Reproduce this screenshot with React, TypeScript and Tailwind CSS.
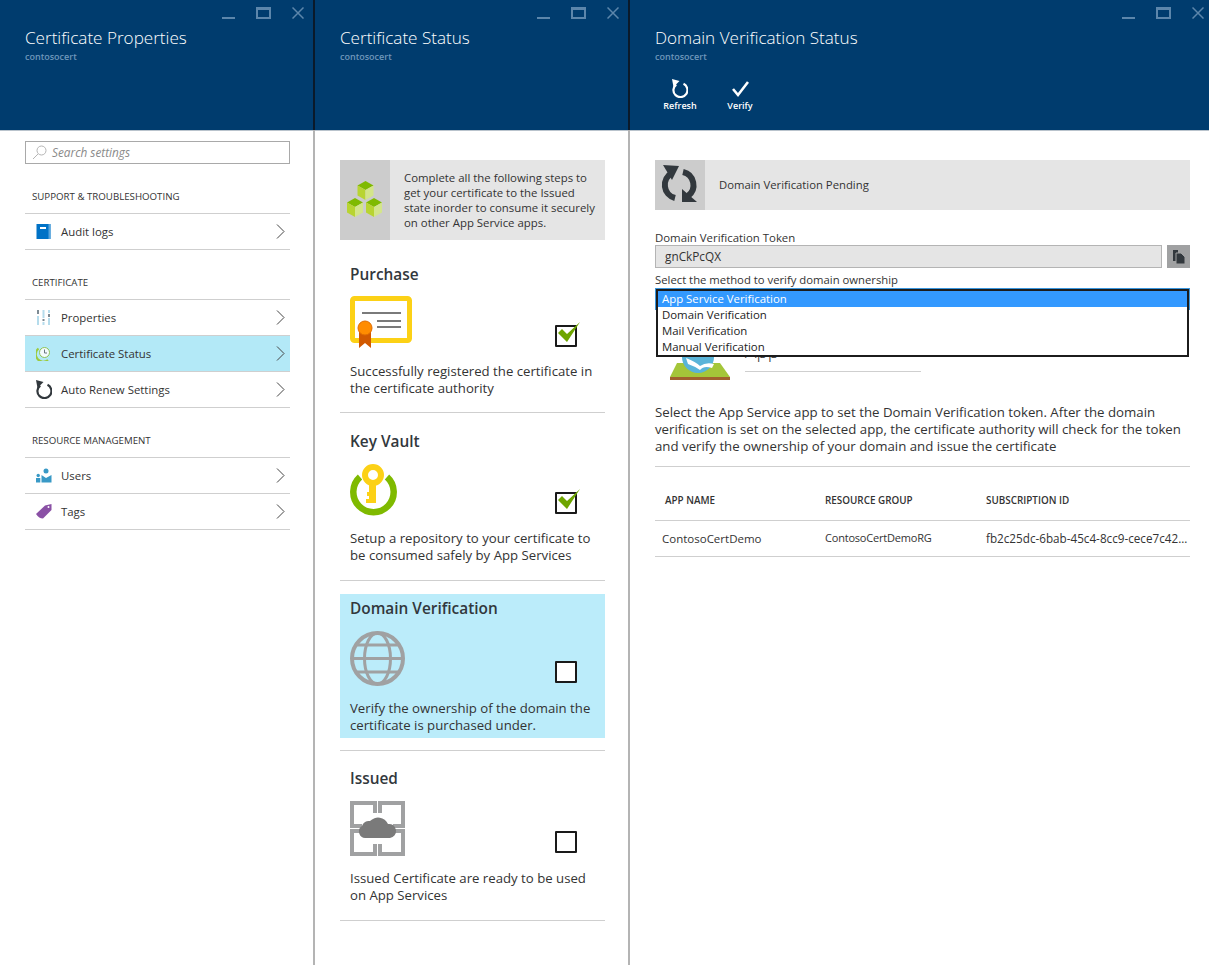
import React from 'react';

const WindowControls = ({ wide }: { wide?: boolean }) => (
  <div className={`flex justify-end pt-[7px] gap-[21px] h-[22px] ${wide ? 'pr-[5px]' : 'pr-[9px]'}`}>
    <svg width="13" height="12" viewBox="0 0 13 12"><rect x="0" y="10" width="13" height="2" fill="#5c86ab" /></svg>
    <svg width="15" height="12" viewBox="0 0 15 12"><rect x="1" y="1" width="13" height="10" fill="none" stroke="#5c86ab" strokeWidth="2" /><rect x="1" y="0" width="13" height="3" fill="#5c86ab" /></svg>
    <svg width="12" height="12" viewBox="0 0 12 12"><path d="M0.5 0.5 L11.5 11.5 M11.5 0.5 L0.5 11.5" stroke="#5c86ab" strokeWidth="1.5" /></svg>
  </div>
);

const BladeHeader = ({ title, wide, children }: { title: string; wide?: boolean; children?: React.ReactNode }) => (
  <div className="h-[131px] bg-[#003c6e] border-b border-[#b9c3cc]">
    <WindowControls wide={wide} />
    <div className="pl-[25px] pt-[3px]">
      <div className="text-[17.1px] leading-[26px] text-white font-light">{title}</div>
      <div className="text-[9px] leading-[12px] font-semibold text-[#6f97bb]">contosocert</div>
      {children}
    </div>
  </div>
);

const Chevron = () => (
  <svg width="9" height="15" viewBox="0 0 9 15" className="ml-auto mr-[5px]">
    <path d="M1 0.5 L8 7.5 L1 14.5" fill="none" stroke="#444" strokeWidth="1" />
  </svg>
);

const BookIcon = () => (
  <svg width="15" height="15" viewBox="0 0 15 15">
    <rect x="0.5" y="0" width="14" height="15" fill="#0072c6" />
    <rect x="12.5" y="0" width="2" height="15" fill="#59a5dd" />
    <rect x="4" y="3" width="6" height="2" fill="#fff" />
  </svg>
);

const SlidersIcon = () => (
  <svg width="15" height="15" viewBox="0 0 15 15">
    <rect x="1" y="0" width="2" height="4" fill="#7d8a93" /><rect x="1" y="6" width="2" height="9" fill="#b5dcec" />
    <rect x="6.5" y="0" width="2" height="8" fill="#b5dcec" /><rect x="6.5" y="9" width="2" height="2" fill="#7d8a93" /><rect x="6.5" y="12" width="2" height="3" fill="#b5dcec" />
    <rect x="12" y="0" width="2" height="3" fill="#b5dcec" /><rect x="12" y="4" width="2" height="3" fill="#7d8a93" /><rect x="12" y="8" width="2" height="7" fill="#b5dcec" />
  </svg>
);

const ClockIcon = () => (
  <svg width="15" height="15" viewBox="0 0 15 15">
    <path d="M2.5 2.5 A7 7 0 0 0 12 14" fill="none" stroke="#9ccb3c" strokeWidth="2" />
    <circle cx="8.5" cy="6.5" r="5" fill="#f4fbfd" stroke="#8fc356" strokeWidth="1" />
    <path d="M8.5 3.5 V7 H11" fill="none" stroke="#6b7780" strokeWidth="1" />
  </svg>
);

const RefreshIcon = ({ color }: { color: string }) => (
  <svg width="16" height="19" viewBox="0 0 16 19">
    <path d="M4.2 5.5 A7 7 0 1 0 11.5 4.8" fill="none" stroke={color} strokeWidth="2.2" />
    <path d="M0 0 L7.5 2 L1.5 8 Z" fill={color} />
  </svg>
);

const UsersIcon = () => (
  <svg width="16" height="15" viewBox="0 0 16 15">
    <circle cx="10" cy="3" r="2.5" fill="#3999c6" />
    <path d="M5.5 7 L10 10 L15.5 7 V14.5 H5.5 Z" fill="#3999c6" />
    <circle cx="2.2" cy="7.5" r="1.7" fill="#3999c6" />
    <path d="M0 10 H4.3 V14.5 H0 Z" fill="#3999c6" />
  </svg>
);

const TagIcon = () => (
  <svg width="16" height="15" viewBox="0 0 16 15">
    <path d="M0 10 L9 1.5 L15.5 0 L15.5 6 L7 14.5 Q3 14.5 0 10 Z" fill="#8a50a5" />
    <circle cx="12.5" cy="3" r="1" fill="#fff" />
  </svg>
);

const NavRow = ({ icon, label, active }: { icon: React.ReactNode; label: string; active?: boolean }) => (
  <div className={`flex items-center h-[36px] border-b border-[#cfcfcf] ${active ? 'bg-[#b3e9f7]' : ''}`}>
    <div className="w-[36px] pl-[11px] flex items-center shrink-0">{icon}</div>
    <span className="text-[11.4px] text-[#333]">{label}</span>
    <Chevron />
  </div>
);

const NavSection = ({ title, children }: { title: string; children: React.ReactNode }) => (
  <div className="mt-[25px]">
    <div className="pl-[7px] pt-[1px] h-[24px] text-[9.7px] leading-[14px] font-medium text-[#333]">{title}</div>
    <div className="border-t border-[#cfcfcf]">{children}</div>
  </div>
);

const CubesIcon = () => {
  const cube = (x: number, y: number) => (
    <g transform={`translate(${x} ${y})`}>
      <path d="M8 0 L16 4.5 L8 9 L0 4.5 Z" fill="#7fba00" />
      <path d="M0 4.5 L8 9 V19 L0 14.5 Z" fill="#b8d432" />
      <path d="M16 4.5 L8 9 V19 L16 14.5 Z" fill="#d3e58a" />
    </g>
  );
  return (
    <svg width="37" height="38" viewBox="0 0 37 38">
      {cube(10.5, 0)}
      {cube(0, 17)}
      {cube(19, 17)}
    </svg>
  );
};

const CertIcon = () => (
  <svg width="62" height="53" viewBox="0 0 62 53">
    <rect x="2.5" y="2.5" width="57" height="42" rx="2" fill="#fff" stroke="#fcd116" strokeWidth="5" />
    <rect x="12" y="16" width="39" height="2" fill="#7a7a7a" />
    <rect x="27" y="24" width="24" height="2" fill="#7a7a7a" />
    <rect x="27" y="30" width="24" height="2" fill="#7a7a7a" />
    <path d="M9 32 H21 V52 L15 47 L9 52 Z" fill="#d15900" />
    <circle cx="15" cy="32" r="7" fill="#ff8c00" stroke="#e06c00" strokeWidth="1" />
  </svg>
);

const KeyVaultIcon = () => (
  <svg width="47" height="53" viewBox="0 0 47 53">
    <path d="M10 14 A20.2 20.2 0 1 0 37 14" fill="none" stroke="#7fba00" strokeWidth="6.5" />
    <circle cx="23" cy="12" r="8" fill="none" stroke="#fcd116" strokeWidth="6" />
    <path d="M19 20 H26 V40 H16 V36 H19 V33 H17 V29 H19 Z" fill="#fcd116" />
  </svg>
);

const GlobeIcon = () => (
  <svg width="55" height="55" viewBox="0 0 55 55" fill="none" stroke="#a0a1a2" strokeWidth="3">
    <circle cx="27.5" cy="27.5" r="25.5" strokeWidth="4" />
    <ellipse cx="27.5" cy="27.5" rx="13" ry="25.5" />
    <path d="M2 27.5 H53 M7 14 H48 M7 41 H48" />
  </svg>
);

const IssuedIcon = () => (
  <svg width="55" height="55" viewBox="0 0 55 55">
    <g fill="none" stroke="#a0a1a2" strokeWidth="4">
      <path d="M25 12 V2 H2 V25 H12" /><path d="M30 12 V2 H53 V25 H43" /><path d="M25 43 V53 H2 V30 H12" /><path d="M30 43 V53 H53 V30 H43" />
    </g>
    <path d="M16 37 A6.5 6.5 0 0 1 12 25 A7 7 0 0 1 20 20 A11 11 0 0 1 38 23 A7 7 0 0 1 40 37 Z" fill="#7a7a7a" />
  </svg>
);

const Checkbox = ({ checked }: { checked?: boolean }) => (
  <div className={`relative w-[22px] h-[22px] border-2 border-[#1a1a1a] rounded-[1px] bg-white ml-auto mr-[28px] self-end shrink-0 ${checked ? 'mb-[2px]' : 'mb-[3px]'}`}>
    {checked && (
      <svg width="26" height="26" viewBox="0 0 26 26" className="absolute left-[-1px] top-[-9px]">
        <path d="M2 15 L6 11 L11 16 L24 4 L11 24 Z" fill="#6ea500" />
      </svg>
    )}
  </div>
);

const Step = ({ title, icon, text, checked, active, iconH }: { title: string; icon: React.ReactNode; text: string[]; checked?: boolean; active?: boolean; iconH: string }) => (
  <div className={`pl-[10px] ${active ? 'bg-[#bbecfa] pt-[1px] pb-[4px]' : ''}`}>
    <div className="h-[26px] pt-[1px] text-[15.4px] leading-[26px] font-semibold text-[#32383d]">{title}</div>
    <div className={`flex ${iconH}`}>
      {icon}
      <Checkbox checked={checked} />
    </div>
    <div className="text-[13.2px] leading-[17px] text-[#333] mt-[14px]">
      {text.map((t) => <div key={t}>{t}</div>)}
    </div>
  </div>
);

const SyncIcon = () => (
  <svg width="50" height="50" viewBox="0 0 50 50" fill="none">
    <path d="M17 13 A13.5 13.5 0 0 0 20 38" stroke="#32383d" strokeWidth="6" />
    <path d="M28 12 A13.5 13.5 0 0 1 33 36" stroke="#32383d" strokeWidth="6" />
    <path d="M8 5 L24 6 L17 20 Z" fill="#32383d" />
    <path d="M27 29 L42 42 L27 42 Z" fill="#32383d" />
  </svg>
);

const AppServiceIcon = () => (
  <svg width="60" height="40" viewBox="0 0 60 40">
    <path d="M7 23 H50 L60 37 H0 Z" fill="#a4c639" />
    <circle cx="28" cy="17" r="16" fill="#59b4d9" />
    <path d="M16 18 Q26 22 30 26 Q36 22 44 24 L42 28 Q34 25 30 30 Q24 26 18 24 Z" fill="#fff" />
    <rect x="0" y="37" width="60" height="3" fill="#a0622d" />
  </svg>
);

const DROPDOWN_OPTIONS = ['Domain Verification', 'Mail Verification', 'Manual Verification'];

export default function App() {
  return (
    <div className="flex w-[1209px] h-[965px] overflow-hidden bg-white font-['Open_Sans',sans-serif]">
      {/* blade 1 */}
      <div className="w-[313px] shrink-0">
        <BladeHeader title="Certificate Properties" />
        <div className="pl-[25px] pr-[23px] pt-[10px]">
          <div className="flex items-center h-[23px] border border-[#a9a9a9] pl-[6px] gap-[5px]">
            <svg width="15" height="15" viewBox="0 0 15 15" fill="none" stroke="#b5b5b5"><circle cx="9.5" cy="5.5" r="4.5" /><path d="M6 9 L1 14" /></svg>
            <span className="text-[11.8px] italic text-[#8a8a8a]">Search settings</span>
          </div>
          <NavSection title="SUPPORT & TROUBLESHOOTING">
            <NavRow icon={<BookIcon />} label="Audit logs" />
          </NavSection>
          <NavSection title="CERTIFICATE">
            <NavRow icon={<SlidersIcon />} label="Properties" />
            <NavRow icon={<ClockIcon />} label="Certificate Status" active />
            <NavRow icon={<RefreshIcon color="#32383d" />} label="Auto Renew Settings" />
          </NavSection>
          <NavSection title="RESOURCE MANAGEMENT">
            <NavRow icon={<UsersIcon />} label="Users" />
            <NavRow icon={<TagIcon />} label="Tags" />
          </NavSection>
        </div>
      </div>
      <div className="w-[2px] shrink-0 bg-[#b4b4b4] flex flex-col"><div className="h-[130px] bg-[#0a1a2a]" /></div>

      {/* blade 2 */}
      <div className="w-[313px] shrink-0">
        <BladeHeader title="Certificate Status" />
        <div className="pl-[25px] pr-[23px] pt-[29px]">
          <div className="flex h-[80px] bg-[#e5e5e5]">
            <div className="w-[50px] bg-[#cccccc] flex items-center justify-center"><CubesIcon /></div>
            <div className="pl-[14px] pt-[10px] text-[11.4px] leading-[15px] text-[#333]">
              <div>Complete all the following steps to</div>
              <div>get your certificate to the Issued</div>
              <div>state inorder to consume it securely</div>
              <div>on other App Service apps.</div>
            </div>
          </div>
          <div className="mt-[21px] pb-[15px] border-b border-[#cfcfcf]">
            <Step title="Purchase" icon={<CertIcon />} iconH="h-[53px] mt-[9px]" checked text={['Successfully registered the certificate in', 'the certificate authority']} />
          </div>
          <div className="mt-[15px] pb-[16px] border-b border-[#cfcfcf]">
            <Step title="Key Vault" icon={<KeyVaultIcon />} iconH="h-[53px] mt-[9px]" checked text={['Setup a repository to your certificate to', 'be consumed safely by App Services']} />
          </div>
          <div className="mt-[13px] pb-[12px] border-b border-[#cfcfcf]">
            <Step title="Domain Verification" icon={<GlobeIcon />} iconH="h-[55px] mt-[10px]" active text={['Verify the ownership of the domain the', 'certificate is purchased under.']} />
          </div>
          <div className="mt-[14px] pb-[16px] border-b border-[#cfcfcf]">
            <Step title="Issued" icon={<IssuedIcon />} iconH="h-[55px] mt-[10px]" text={['Issued Certificate are ready to be used', 'on App Services']} />
          </div>
        </div>
      </div>
      <div className="w-[2px] shrink-0 bg-[#b4b4b4] flex flex-col"><div className="h-[130px] bg-[#0a1a2a]" /></div>

      {/* blade 3 */}
      <div className="flex-1 min-w-0">
        <BladeHeader title="Domain Verification Status" wide>
          <div className="flex mt-[16px] text-white text-[9px] font-semibold">
            <div className="w-[50px] flex flex-col items-center gap-[2px]">
              <RefreshIcon color="#fff" />
              <span className="leading-[12px]">Refresh</span>
            </div>
            <div className="w-[50px] ml-[10px] flex flex-col items-center gap-[2px]">
              <svg width="17" height="19" viewBox="0 0 17 19"><path d="M1 10 L6 16 L16 3" fill="none" stroke="#fff" strokeWidth="2.6" /></svg>
              <span className="leading-[12px]">Verify</span>
            </div>
          </div>
        </BladeHeader>
        <div className="pl-[25px] pr-[19px] pt-[29px]">
          <div className="flex h-[50px] items-center bg-[#e5e5e5]">
            <div className="w-[50px] h-[50px] bg-[#cccccc]"><SyncIcon /></div>
            <span className="pl-[14px] pt-[1px] text-[11.3px] text-[#333]">Domain Verification Pending</span>
          </div>
          <div className="mt-[20px] text-[11.4px] leading-[15px] text-[#333]">Domain Verification Token</div>
          <div className="flex gap-[5px]">
            <div className="flex-1 h-[23px] border border-[#b4b4b4] bg-[#e5e5e5] pl-[9px] text-[11.8px] leading-[20px] text-[#333]">gnCkPcQX</div>
            <div className="w-[23px] h-[23px] bg-[#a0a1a2] flex items-center justify-center">
              <svg width="12" height="14" viewBox="0 0 12 14"><path d="M0 0 H5 V11 H0 Z" fill="#32383d" /><path d="M3 3 H8 L12 7 V14 H3 Z" fill="#32383d" stroke="#a0a1a2" strokeWidth="1" /></svg>
            </div>
          </div>
          <div className="mt-[4px] text-[11.3px] leading-[15px] text-[#333]">Select the method to verify domain ownership</div>
          <div className="relative h-[22px] mt-[1px] border border-[#3a96dd]">
            <div className="absolute left-0 right-0 top-0 border-2 border-[#1c1c1c] bg-white text-[11.4px] leading-[16px] text-[#222] z-10">
              <div className="bg-[#3399ff] text-white pl-[4px]">App Service Verification</div>
              {DROPDOWN_OPTIONS.map((o) => <div key={o} className="pl-[4px]">{o}</div>)}
            </div>
          </div>
          <div className="flex mt-[18px] h-[52px]">
            <div className="ml-[15px] self-end h-[40px]"><AppServiceIcon /></div>
            <div className="ml-[15px] w-[176px] h-[44px] border-b border-[#cfcfcf] pt-[10px] text-[19px] leading-[26px] font-light text-[#333]">App</div>
          </div>
          <div className="mt-[24px] text-[13.25px] leading-[17px] text-[#333] pb-[11px] border-b border-[#cfcfcf]">
            <div>Select the App Service app to set the Domain Verification token. After the domain</div>
            <div>verification is set on the selected app, the certificate authority will check for the token</div>
            <div>and verify the ownership of your domain and issue the certificate</div>
          </div>
          <div className="grid grid-cols-[160px_160px_1fr] h-[54px] items-center border-b border-[#cfcfcf] pt-[14px] text-[9.9px] font-semibold text-[#333]">
            <div className="pl-[10px]">APP NAME</div>
            <div className="pl-[10px]">RESOURCE GROUP</div>
            <div className="pl-[11px]">SUBSCRIPTION ID</div>
          </div>
          <div className="grid grid-cols-[160px_160px_1fr] h-[36px] items-center border-b border-[#cfcfcf] text-[11.5px] text-[#333]">
            <div className="pl-[7px]">ContosoCertDemo</div>
            <div className="pl-[10px] text-[11px] tracking-[-0.2px]">ContosoCertDemoRG</div>
            <div className="pl-[11px] truncate text-[11.7px]">fb2c25dc-6bab-45c4-8cc9-cece7c42...</div>
          </div>
        </div>
      </div>
    </div>
  );
}
